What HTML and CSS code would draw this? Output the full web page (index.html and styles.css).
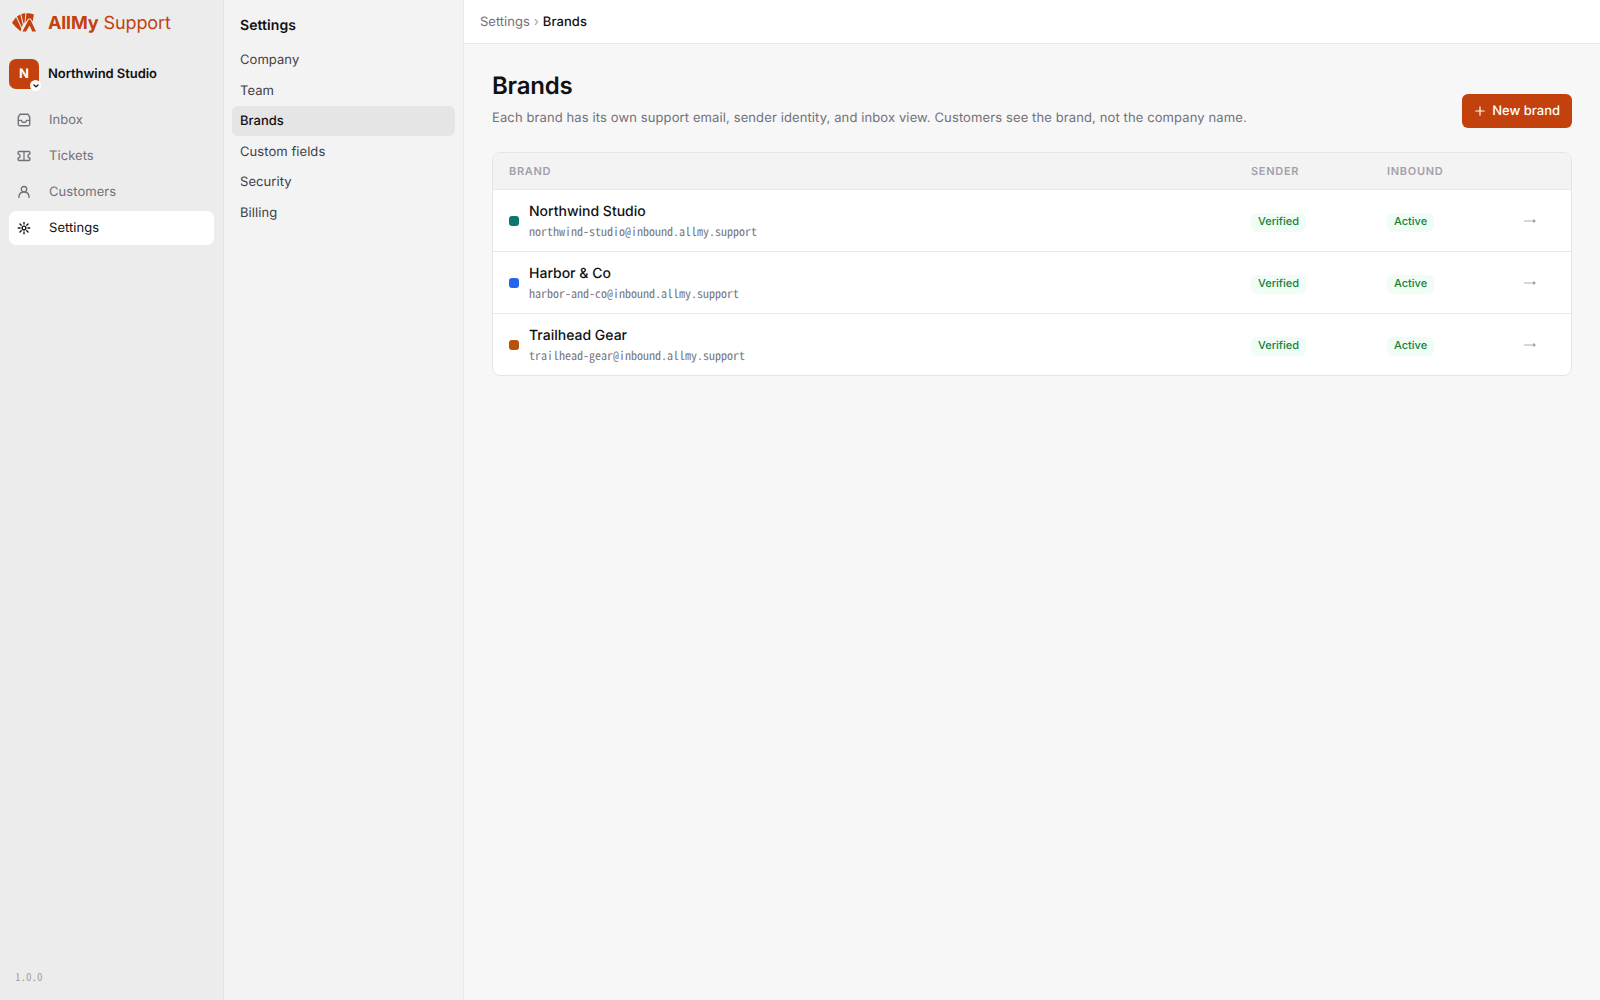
FILE: index.html
```html
<!DOCTYPE html>
<html lang="en">
<head>
<meta charset="utf-8">
<title>Brands · AllMy Support</title>
<link rel="stylesheet" href="styles.css">
</head>
<body>
<div class="app">
  <aside class="sidebar">
    <div class="logo">
      <svg class="logo-mark" width="24" height="20" viewBox="0 0 24 20" fill="#c2410c">
        <path d="M0 9.700 4 4.300 9.300 15.600 8.500 18.300Q3.600 14.400 0 9.700Z"/>
        <path d="M4.900 3.500 8.300 1.500 10.700 11.600 9.800 14.300Z"/>
        <path d="M9.300 1.100Q11.300.4 13.400.3L12.500 9.200 11.500 10.800Z"/>
        <path d="M14.400.3Q18.500.2 21.900 1.500L20.700 8.600 18.700 5.500H16.400L13.400 9.500Z"/>
        <path d="M16.800 6.500h1.600L24 18.600h-3.800L17.600 12.400 14 18.600H10.400Z"/>
      </svg>
      <div class="logo-text"><b>AllMy</b> Support</div>
    </div>
    <div class="workspace">
      <div class="avatar">N
        <span class="avatar-badge"><svg width="6" height="4" viewBox="0 0 6 4" fill="none" stroke="#18181b" stroke-width="1.3" stroke-linecap="round" stroke-linejoin="round"><path d="M1 1l2 1.8L5 1"/></svg></span>
      </div>
      <div class="workspace-name">Northwind Studio</div>
    </div>
    <nav class="nav">
      <a class="nav-item"><svg class="icon" viewBox="0 0 14 14"><path d="M3.2 1.2h7.6L12.7 4v7.2a1.5 1.5 0 0 1-1.5 1.5H2.800a1.500 1.500 0 0 1-1.500-1.500V4z"/><path d="M1.300 7.300h2.900c.5 0 .6 1.900 1.600 1.900h2.400c1 0 1.100-1.900 1.600-1.900h2.900"/></svg>Inbox</a>
      <a class="nav-item"><svg class="icon" viewBox="0 0 14 14"><path d="M2 2.500h10a.9.9 0 0 1 .9.9v1.700a1.900 1.900 0 0 0 0 3.800v1.700a.9.9 0 0 1-.9.9H2a.9.9 0 0 1-.9-.9V8.900a1.900 1.900 0 0 0 0-3.800V3.400a.9.900 0 0 1 .9-.9z"/><path d="M7 3.500v7" stroke-dasharray="1.500 1.200"/></svg>Tickets</a>
      <a class="nav-item"><svg class="icon" viewBox="0 0 14 14"><circle cx="7" cy="4.200" r="2.700"/><path d="M1.900 12.500C1.900 9.200 4 7 7 7s5.100 2.200 5.100 5.500"/></svg>Customers</a>
      <a class="nav-item active"><svg class="icon" viewBox="0 0 14 14"><circle cx="7" cy="7" r="1.900"/><path d="M7 1.300v1.700M7 11v1.700M1.300 7H3M11 7h1.700M3 3l1.200 1.200M9.800 9.800 11 11M11 3 9.800 4.200M4.200 9.800 3 11"/></svg>Settings</a>
    </nav>
    <div class="version">1.0.0</div>
  </aside>
  <aside class="subnav">
    <h2 class="subnav-title">Settings</h2>
    <nav class="subnav-list">
      <a class="subnav-item">Company</a>
      <a class="subnav-item">Team</a>
      <a class="subnav-item active">Brands</a>
      <a class="subnav-item">Custom fields</a>
      <a class="subnav-item">Security</a>
      <a class="subnav-item">Billing</a>
    </nav>
  </aside>
  <main class="main">
    <header class="crumbs"><span>Settings</span><span class="crumb-sep">›</span><span class="crumb-current">Brands</span></header>
    <div class="content">
      <div class="page-head">
        <div>
          <h1 class="page-title">Brands</h1>
          <p class="page-desc">Each brand has its own support email, sender identity, and inbox view. Customers see the brand, not the company name.</p>
        </div>
        <button class="button"><svg class="plus" viewBox="0 0 12 12"><path d="M6 1.800v8.400M1.800 6h8.400"/></svg>New brand</button>
      </div>
      <div class="table">
        <div class="row row-head"><span>Brand</span><span>Sender</span><span>Inbound</span><span></span></div>
        <div class="row">
          <div class="brand"><span class="dot teal"></span><div><div class="brand-name">Northwind Studio</div><div class="brand-mail">northwind-studio@inbound.allmy.support</div></div></div>
          <div><span class="pill">Verified</span></div><div><span class="pill">Active</span></div><svg class="arrow" viewBox="0 0 14 6"><path class="shaft" d="M1 3h10"/><path d="M10.200.8 13 3l-2.800 2.200z"/></svg>
        </div>
        <div class="row">
          <div class="brand"><span class="dot blue"></span><div><div class="brand-name">Harbor &amp; Co</div><div class="brand-mail">harbor-and-co@inbound.allmy.support</div></div></div>
          <div><span class="pill">Verified</span></div><div><span class="pill">Active</span></div><svg class="arrow" viewBox="0 0 14 6"><path class="shaft" d="M1 3h10"/><path d="M10.200.8 13 3l-2.800 2.200z"/></svg>
        </div>
        <div class="row">
          <div class="brand"><span class="dot amber"></span><div><div class="brand-name">Trailhead Gear</div><div class="brand-mail">trailhead-gear@inbound.allmy.support</div></div></div>
          <div><span class="pill">Verified</span></div><div><span class="pill">Active</span></div><svg class="arrow" viewBox="0 0 14 6"><path class="shaft" d="M1 3h10"/><path d="M10.200.8 13 3l-2.800 2.200z"/></svg>
        </div>
      </div>
    </div>
  </main>
</div>
</body>
</html>
```
FILE: styles.css
```css
* { box-sizing: border-box; }
body {
  margin: 0;
  font: 13px/1.5 Inter, "Liberation Sans", sans-serif;
  color: #111113;
  background: #f7f7f7;
  text-rendering: geometricPrecision;
  -webkit-font-smoothing: antialiased;
}
.app { display: flex; height: 100vh; }
.sidebar {
  width: 224px;
  display: flex;
  flex-direction: column;
  padding: 0 9px;
  background: #ececec;
  border-right: 1px solid #e4e4e4;
}
.logo {
  display: flex;
  align-items: center;
  gap: 12px;
  height: 47px;
  padding-left: 3px;
  border-bottom: 1px solid #e9e9e9;
  color: #c2410c;
}
.logo-mark { display: block; }
.logo-text { padding-top: 2px; font-size: 18px; line-height: 24px; letter-spacing: -0.1px; }
.logo-text b { font-weight: 700; }
.workspace { display: flex; align-items: center; gap: 9px; height: 54px; }
.avatar {
  position: relative;
  width: 30px;
  height: 30px;
  border-radius: 7px;
  background: #c2410c;
  color: #fff;
  font-weight: 700;
  line-height: 30px;
  text-align: center;
}
.avatar-badge {
  position: absolute;
  right: -2px;
  bottom: -2px;
  width: 11px;
  height: 11px;
  border-radius: 50%;
  background: #fff;
  display: flex;
  align-items: center;
  justify-content: center;
}
.workspace-name { padding-top: 2px; font-weight: 600; letter-spacing: -0.06px; }
.nav { display: flex; flex-direction: column; gap: 2px; padding-top: 2px; }
.nav-item {
  display: flex;
  align-items: center;
  gap: 18px;
  height: 34px;
  padding: 2px 8px 0;
  border-radius: 7px;
  color: #71717a;
  letter-spacing: 0.06px;
}
.nav-item.active { background: #fff; color: #111113; }
.icon {
  width: 14px;
  height: 14px;
  margin-bottom: 2px;
  fill: none;
  stroke: currentColor;
  stroke-width: 1.35;
  stroke-linecap: round;
  stroke-linejoin: round;
}
.version {
  margin-top: auto;
  padding: 0 6px 15px;
  font: 11px/16px "Noto Sans Mono CJK SC", "Noto Sans Mono CJK JP", "Liberation Mono", monospace;
  color: #a1a1aa;
}
.subnav { width: 240px; padding: 15px 8px; background: #f3f3f3; border-right: 1px solid #e8e8e8; }
.subnav-title { margin: 0 0 9px; padding: 0 8px; font-size: 14px; line-height: 21px; font-weight: 600; letter-spacing: 0.06px; }
.subnav-list { display: flex; flex-direction: column; gap: 1px; }
.subnav-item { padding: 6px 8px 4px; border-radius: 6px; color: #3f3f46; letter-spacing: 0.06px; }
.subnav-item.active { background: #e5e5e5; color: #111113; font-weight: 500; letter-spacing: 0; }
.main { flex: 1; display: flex; flex-direction: column; }
.crumbs {
  display: flex;
  align-items: center;
  gap: 4px;
  height: 44px;
  padding: 2px 16px 0;
  background: #fff;
  border-bottom: 1px solid #e8e8e8;
  color: #71717a;
}
.crumb-sep { color: #a1a1aa; }
.crumb-current { color: #111113; font-weight: 500; letter-spacing: 0.08px; }
.content { padding: 24px 28px; }
.page-head { display: flex; justify-content: space-between; align-items: flex-end; margin-bottom: 24px; }
.page-title { margin: 0 0 4px; font-size: 24px; line-height: 36px; font-weight: 600; letter-spacing: -0.2px; }
.page-desc { margin: 0 0 -1px; padding-top: 1px; color: #71717a; letter-spacing: 0.112px; }
.button {
  display: flex;
  align-items: center;
  gap: 6px;
  height: 34px;
  padding: 2px 12px 0;
  border: 0;
  border-radius: 6px;
  background: #c2410c;
  color: #fff;
  font: inherit;
  font-weight: 500;
  text-rendering: inherit;
}
.plus {
  width: 12px;
  height: 12px;
  margin-bottom: 2px;
  fill: none;
  stroke: #fff;
  stroke-width: 1.2;
  stroke-linecap: round;
}
.table { border: 1px solid #e5e5e5; border-radius: 8px; background: #fff; overflow: hidden; }
.row {
  display: grid;
  grid-template-columns: 1fr 120px 120px 32px;
  gap: 16px;
  align-items: center;
  height: 62px;
  padding: 1px 16px 0;
  border-bottom: 1px solid #e8e8e8;
}
.row:last-child { height: 61px; border-bottom: 0; }
.row-head {
  height: 37px;
  background: #f3f3f3;
  color: #a1a1aa;
  font-size: 11px;
  font-weight: 600;
  letter-spacing: 0.7px;
  text-transform: uppercase;
}
.brand { display: flex; align-items: center; gap: 10px; }
.dot { width: 10px; height: 10px; border-radius: 3px; }
.teal { background: #0f766e; }
.blue { background: #2563eb; }
.amber { background: #b45309; }
.brand-name { font-size: 14px; line-height: 21px; font-weight: 500; }
.brand-mail {
  margin-bottom: -1px;
  padding-top: 1px;
  font: 12px/18px "Noto Sans Mono CJK SC", "Noto Sans Mono CJK JP", "Liberation Mono", monospace;
  color: #777780;
}
.pill {
  display: inline-block;
  margin-top: 3px;
  padding: 0.5px 7px 2px;
  border-radius: 6px;
  background: #f0fdf4;
  color: #15803d;
  font-size: 11px;
  font-weight: 500;
}
.arrow { width: 14px; height: 6px; fill: #a1a1aa; }
.shaft { stroke: #c9c9ce; stroke-width: 1.4; }
```
